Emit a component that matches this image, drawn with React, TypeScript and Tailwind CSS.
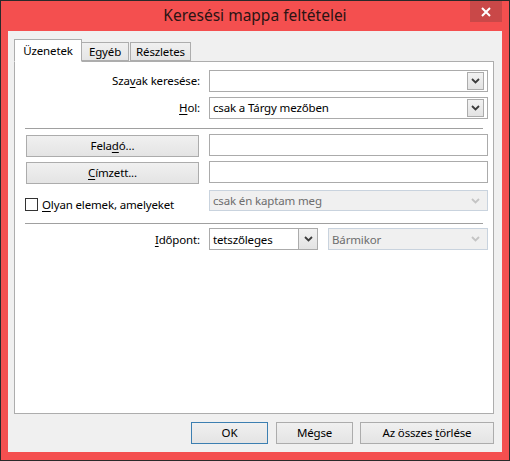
import React from "react";

const font = "font-['Noto_Sans',sans-serif]";

function U({ children }: { children: React.ReactNode }) {
  return <span className="underline underline-offset-2 decoration-1">{children}</span>;
}

function Chevron({ disabled }: { disabled?: boolean }) {
  return (
    <svg width="9" height="6" viewBox="0 0 9 6">
      <path
        d="M1 1 L4.5 4.5 L8 1"
        fill="none"
        stroke={disabled ? "#c4c4c4" : "#3c3c3c"}
        strokeWidth="1.8"
      />
    </svg>
  );
}

function Combo({ value, className }: { value?: string; className: string }) {
  return (
    <div className={`flex items-center h-[22px] border border-[#ababab] bg-white ${className}`}>
      <span className="flex-1 pl-[3px] truncate">{value}</span>
      <div className="w-[17px] h-[18px] mr-[3px] flex items-center justify-center border border-[#acacac] bg-gradient-to-b from-[#f2f2f2] to-[#e3e3e3]">
        <Chevron />
      </div>
    </div>
  );
}

function DisabledCombo({ value, className }: { value: string; className: string }) {
  return (
    <div className={`flex items-center border border-[#c9d3de] bg-[#f0f0f0] text-[#6d6d6d] ${className}`}>
      <span className="flex-1 pl-[3px]">{value}</span>
      <div className="w-[17px] mr-[3px] flex items-center justify-center">
        <Chevron disabled />
      </div>
    </div>
  );
}

function Btn({ children, className }: { children: React.ReactNode; className: string }) {
  return (
    <div
      className={`flex items-center justify-center h-[22px] border bg-gradient-to-b from-[#f0f0f0] to-[#e4e4e4] ${className}`}
    >
      <span>{children}</span>
    </div>
  );
}

function Separator() {
  return <div className="ml-[10px] w-[458px] border-t border-t-[#a0a0a0] border-b border-b-white" />;
}

export default function App() {
  return (
    <div
      className={`w-[510px] h-[461px] bg-[#f44f4f] border border-[#2a2a2a] ${font} text-[11.5px] tracking-[-0.15px] text-black`}
    >
      {/* Title bar */}
      <div className="relative h-[30px] flex items-center justify-center">
        <span className="text-[15.5px] tracking-normal text-[#2a1414] -mt-[1px]">Keresési mappa feltételei</span>
        <div className="absolute right-[7px] top-0 w-[32px] h-[21px] bg-[#c94848] flex items-center justify-center">
          <svg width="10" height="10" viewBox="0 0 10 10">
            <path d="M1 1 L9 9 M9 1 L1 9" stroke="white" strokeWidth="2" />
          </svg>
        </div>
      </div>

      {/* Client */}
      <div className="mx-[7px] h-[421px] bg-[#f0f0f0] pt-[8px] pl-[6px]">
        {/* Tabs */}
        <div className="flex items-end h-[22px] relative z-10">
          <div className="w-[68px] h-[23px] -mb-[1px] bg-white border border-[#adadad] border-b-white flex items-center justify-center">
            Üzenetek
          </div>
          <div className="w-[47px] h-[19px] border border-l-0 border-[#adadad] bg-gradient-to-b from-[#f0f0f0] to-[#e5e5e5] flex items-center justify-center">
            Egyéb
          </div>
          <div className="w-[61px] h-[19px] border border-[#adadad] bg-gradient-to-b from-[#f0f0f0] to-[#e5e5e5] flex items-center justify-center ml-[1px]">
            Részletes
          </div>
        </div>

        {/* Panel */}
        <div className="w-[480px] h-[353px] bg-white border border-[#adadad]">
          <div className="flex items-center mt-[8px]">
            <div className="w-[174px] ml-[11px] text-right">
              Sza<U>v</U>ak keresése:
            </div>
            <Combo className="ml-[9px] w-[279px]" />
          </div>
          <div className="flex items-center mt-[5px]">
            <div className="w-[174px] ml-[11px] text-right">
              <U>H</U>ol:
            </div>
            <Combo className="ml-[9px] w-[279px]" value="csak a Tárgy mezőben" />
          </div>

          <div className="mt-[9px]">
            <Separator />
          </div>

          <div className="flex items-start mt-[4px]">
            <Btn className="ml-[11px] mt-[1px] w-[173px] border-[#acacac]">
              Fela<U>d</U>ó...
            </Btn>
            <div className="ml-[10px] w-[279px] h-[22px] border border-[#ababab] bg-white" />
          </div>
          <div className="flex items-start mt-[4px]">
            <Btn className="ml-[11px] mt-[1px] w-[173px] border-[#acacac]">
              <U>C</U>ímzett...
            </Btn>
            <div className="ml-[10px] w-[279px] h-[22px] border border-[#ababab] bg-white" />
          </div>

          <div className="flex items-center mt-[4px]">
            <div className="w-[174px] ml-[10px] flex items-center mt-[8px]">
              <div className="w-[13px] h-[13px] border border-[#333333] bg-white" />
              <span className="ml-[4px]">
                <U>O</U>lyan elemek, amelyeket
              </span>
            </div>
            <DisabledCombo className="ml-[10px] w-[279px] h-[21px]" value="csak én kaptam meg" />
          </div>

          <div className="mt-[10px]">
            <Separator />
          </div>

          <div className="flex items-center mt-[3px]">
            <div className="w-[174px] ml-[11px] text-right">
              <U>I</U>dőpont:
            </div>
            <div className="ml-[9px] w-[109px] h-[22px] flex items-center border border-[#ababab] bg-white">
              <span className="flex-1 pl-[3px]">tetszőleges</span>
              <div className="w-[19px] h-[20px] flex items-center justify-center border-l border-[#acacac] bg-gradient-to-b from-[#f2f2f2] to-[#e3e3e3]">
                <Chevron />
              </div>
            </div>
            <DisabledCombo className="ml-[10px] w-[160px] h-[22px]" value="Bármikor" />
          </div>
        </div>

        {/* Bottom buttons */}
        <div className="flex justify-end pr-[8px] mt-[8px]">
          <Btn className="w-[77px] border-[#3c7fb1]">OK</Btn>
          <Btn className="ml-[8px] w-[77px] border-[#acacac]">Mégse</Btn>
          <Btn className="ml-[7px] w-[134px] border-[#acacac]">
            Az összes <U>t</U>örlése
          </Btn>
        </div>
      </div>
    </div>
  );
}
